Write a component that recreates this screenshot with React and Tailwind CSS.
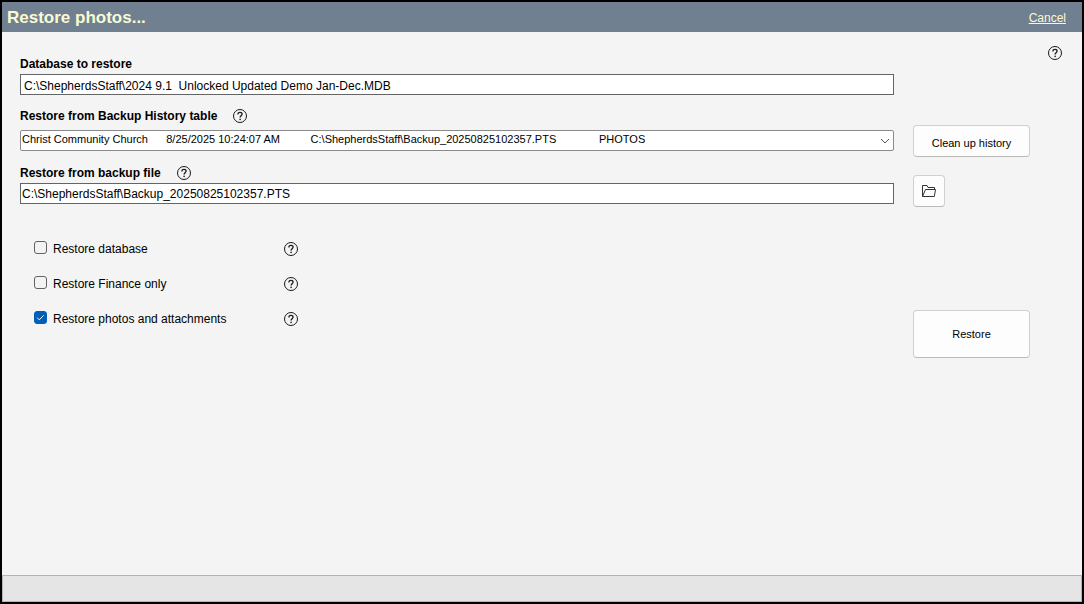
const historyEntry = [
  'Christ Community Church',
  '8/25/2025 10:24:07 AM',
  'C:\\ShepherdsStaff\\Backup_20250825102357.PTS',
  'PHOTOS',
];

// an <option> can't hold columns, so they are spaced out with nbsp
const historyGaps = [6, 10, 14, 0];
const historyLabel = historyEntry.map((part, i) => part + '\u00a0'.repeat(historyGaps[i])).join('');

function HelpButton({ label }) {
  return (
    <button type="button" aria-label={label} className="block size-[14px] shrink-0">
      <svg viewBox="0 0 14 14" className="size-[14px]" fill="none" stroke="#1a1a1a">
        <circle cx="7" cy="7" r="6.5" strokeWidth="1" />
        <path d="M4.9 5.4C4.9 4 5.8 3.3 7 3.3s2.1.7 2.1 1.8c0 1.5-2 1.7-2 3.3" strokeWidth="1.3" />
        <circle cx="7.1" cy="10.4" r=".8" fill="#1a1a1a" stroke="none" />
      </svg>
    </button>
  );
}

function RestoreOption({ id, label, defaultChecked = false }) {
  return (
    <div className="flex h-[35px] items-center">
      <div className="flex w-[250px] items-center gap-[6px]">
        <span className="grid shrink-0 pb-[3px]">
          <input
            id={id}
            type="checkbox"
            defaultChecked={defaultChecked}
            className="peer col-start-1 row-start-1 size-[13px] appearance-none rounded-[3px] border border-[#626262] bg-[#f3f3f3] checked:border-[#005fb8] checked:bg-[#005fb8]"
          />
          <svg
            viewBox="0 0 13 13"
            className="pointer-events-none invisible col-start-1 row-start-1 size-[13px] peer-checked:visible"
            fill="none"
            stroke="#ffffff"
          >
            <path d="M3.2 6.7l2.1 2.1 4.4-4.4" />
          </svg>
        </span>
        <label htmlFor={id}>{label}</label>
      </div>
      <HelpButton label={`Help: ${label}`} />
    </div>
  );
}

export default function App() {
  return (
    <div className="flex min-h-screen flex-col border-2 border-black bg-[#f4f4f4] font-['Liberation_Sans',Arial,sans-serif] text-xs text-black">
      <header className="flex h-[30px] items-center justify-between bg-[#708090] pt-[2px] pr-4 pl-[5px] text-[#fafad2]">
        <h1 className="text-[17px] leading-5 font-bold">Restore photos...</h1>
        <a href="#cancel" className="underline">Cancel</a>
      </header>

      <main className="flex grow pr-5 pl-[18px]">
        <form className="min-w-0 grow pt-6">
          <label htmlFor="database" className="block h-[18px] font-bold">Database to restore</label>
          <input
            id="database"
            type="text"
            defaultValue="C:\ShepherdsStaff\2024 9.1  Unlocked Updated Demo Jan-Dec.MDB"
            className="block h-[21px] w-full border border-[#646464] bg-white px-[3px] pt-[2px]"
          />

          <div className="flex h-[35px] items-center gap-4 pt-[7px]">
            <label htmlFor="history" className="font-bold">Restore from Backup History table</label>
            <HelpButton label="Help: Restore from Backup History table" />
          </div>
          <div className="grid items-center">
            <select
              id="history"
              className="col-start-1 row-start-1 h-[21px] w-full appearance-none rounded-[2px] border border-[#8a8a8a] bg-white px-px pb-[2px] text-[11px]"
            >
              <option>{historyLabel}</option>
            </select>
            <svg
              viewBox="0 0 10 6"
              className="pointer-events-none col-start-1 row-start-1 mr-1 h-[6px] w-[10px] justify-self-end"
              fill="none"
              stroke="#555555"
            >
              <path d="M1 1l4 4 4-4" />
            </svg>
          </div>

          <div className="flex h-8 items-center gap-4 pt-3">
            <label htmlFor="backup-file" className="font-bold">Restore from backup file</label>
            <HelpButton label="Help: Restore from backup file" />
          </div>
          <input
            id="backup-file"
            type="text"
            defaultValue="C:\ShepherdsStaff\Backup_20250825102357.PTS"
            className="block h-[21px] w-full border border-[#646464] bg-white px-px"
          />

          <fieldset className="mt-[27px] ml-[14px]">
            <RestoreOption id="restore-database" label="Restore database" />
            <RestoreOption id="restore-finance" label="Restore Finance only" />
            <RestoreOption id="restore-photos" label="Restore photos and attachments" defaultChecked />
          </fieldset>
        </form>

        <aside className="ml-[19px] flex w-[117px] shrink-0 flex-col pt-[93px] text-[11px]">
          <button type="button" className="h-8 rounded-[4px] border border-[#d0d0d0] border-b-[#bababa] bg-[#fdfdfd] pt-1">
            Clean up history
          </button>
          <button
            type="button"
            aria-label="Browse for backup file"
            className="mt-[18px] flex size-8 items-center justify-center rounded-[4px] border border-[#d0d0d0] border-b-[#bababa] bg-[#fdfdfd]"
          >
            <svg viewBox="0 0 14 12" className="h-3 w-[14px]" fill="none" stroke="#333333">
              <path d="M.5 11.5V.5h4.5l1 2h6.5v2M.5 11.5h11.8l1.2-7H3.5L.5 11.5z" />
            </svg>
          </button>
          <button type="button" className="mt-[103px] h-12 rounded-[4px] border border-[#d0d0d0] border-b-[#bababa] bg-[#fdfdfd]">
            Restore
          </button>
        </aside>

        <div className="ml-[18px] pt-[14px]">
          <HelpButton label="Help" />
        </div>
      </main>

      <footer className="h-[27px] border border-[#b4b4b4] bg-[#e5e5e5]" />
    </div>
  );
}
